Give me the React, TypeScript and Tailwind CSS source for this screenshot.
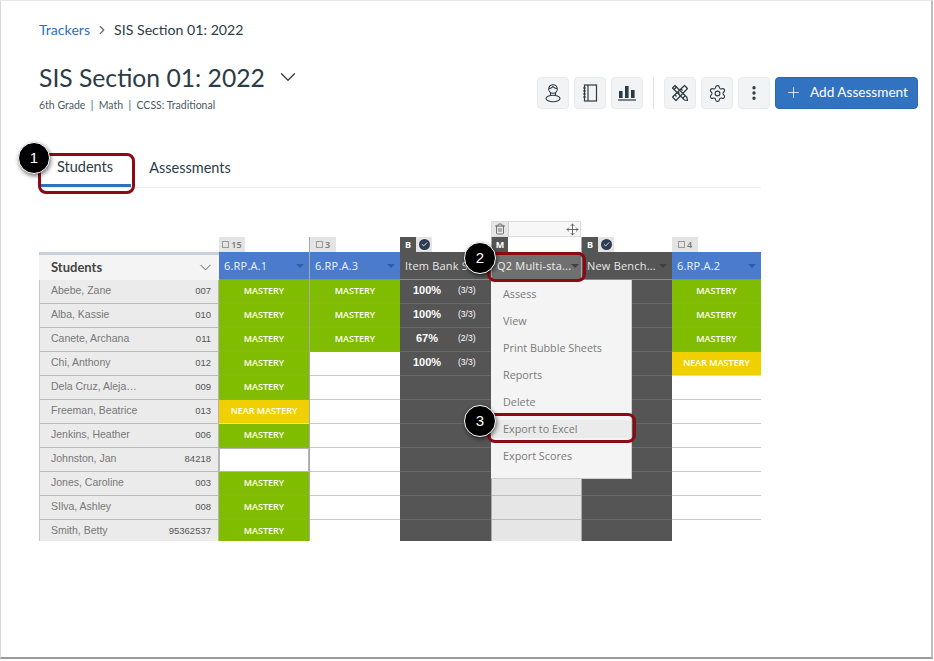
import React from "react";
import { ChevronDown, ChevronRight, Plus, Settings, EllipsisVertical, Trash2, Move, Check } from "lucide-react";

const students: [string, string][] = [
  ["Abebe, Zane", "007"],
  ["Alba, Kassie", "010"],
  ["Canete, Archana", "011"],
  ["Chi, Anthony", "012"],
  ["Dela Cruz, Aleja…", "009"],
  ["Freeman, Beatrice", "013"],
  ["Jenkins, Heather", "006"],
  ["Johnston, Jan", "84218"],
  ["Jones, Caroline", "003"],
  ["SIlva, Ashley", "008"],
  ["Smith, Betty", "95362537"],
];

const M = "MASTERY";
const N = "NEAR MASTERY";
const col1 = [M, M, M, M, M, N, M, "W", M, M, M];
const col2 = [M, M, M, "", "", "", "", "", "", "", ""];
const col6 = [M, M, M, N, "", "", "", "", "", "", ""];
const scores: [string, string][] = [
  ["100%", "(3/3)"],
  ["100%", "(3/3)"],
  ["67%", "(2/3)"],
  ["100%", "(3/3)"],
];
const indices = [0, 1, 2, 3, 4, 5, 6, 7, 8, 9, 10];

function Caret({ color }: { color: string }) {
  return (
    <svg width="8" height="4" viewBox="0 0 8 4" className="shrink-0">
      <path d="M0 0h8L4 4z" fill={color} />
    </svg>
  );
}

function Callout({ n, className }: { n: number; className: string }) {
  return (
    <div
      className={`absolute w-[32px] h-[32px] rounded-full bg-black border border-white text-white flex items-center justify-center text-[15px] shadow-[1px_2px_4px_rgba(0,0,0,0.55)] font-['Liberation_Sans',sans-serif] ${className}`}
    >
      {n}
    </div>
  );
}

function IconBtn({ children }: { children: React.ReactNode }) {
  return (
    <button className="shrink-0 w-[32px] h-[32px] rounded-[4px] bg-[#f2f3f4] border border-[#e8eaec] flex items-center justify-center text-[#2d3b45]">
      {children}
    </button>
  );
}

function MasteryCell({ v }: { v: string }) {
  if (v === M)
    return <div className="h-[24px] bg-[#80bc00] border-b border-[#8aa860] text-white flex items-center justify-center text-[9px] font-semibold pb-px">MASTERY</div>;
  if (v === N)
    return <div className="h-[24px] bg-[#f0d000] border-b border-[#ddd] text-white flex items-center justify-center text-[9px] font-semibold pb-px">NEAR MASTERY</div>;
  if (v === "W") return <div className="h-[24px] bg-white border border-[#b5b5b5]" />;
  return <div className="h-[24px] bg-white border-b border-[#c8c8c8]" />;
}

function Head({ label, dark, active }: { label: string; dark?: boolean; active?: boolean }) {
  return (
    <div
      className={`h-[28px] flex items-center justify-between pl-[5px] pr-[5px] text-[11px] border-b border-[#8d8d8d] ${
        active ? "bg-[#707070] text-[#efefef] pl-[4px]" : dark ? "bg-[#555555] text-[#e6e6e6]" : "bg-[#4a7bcd] text-[#eef3fb]"
      }`}
    >
      <span className="whitespace-nowrap tracking-[0.2px] pt-px">{label}</span>
      <Caret color={dark || active ? "#3f3f3f" : "#2f5da8"} />
    </div>
  );
}

function CountTag({ n }: { n: string }) {
  return (
    <div className="h-[15px] w-[26px] bg-[#e4e4e4] flex items-center justify-center gap-[2px] text-[9px] text-[#777] font-semibold">
      <span className="w-[7px] h-[7px] border border-[#999] inline-block" />
      {n}
    </div>
  );
}

function TypeTag({ letter, checked }: { letter: string; checked?: boolean }) {
  return (
    <div className="h-[15px] flex">
      <div className="w-[16px] bg-[#555] text-white text-[9px] font-bold flex items-center justify-center">{letter}</div>
      {checked && (
        <div className="w-[16px] bg-[#e4e4e4] flex items-center justify-center">
          <span className="w-[11px] h-[11px] rounded-full bg-[#2d3b55] flex items-center justify-center">
            <Check size={7} color="white" strokeWidth={3} />
          </span>
        </div>
      )}
    </div>
  );
}

function TagSlot({ children }: { children?: React.ReactNode }) {
  return <div className="h-[15px] flex">{children}</div>;
}

export default function App() {
  return (
    <div className="relative w-[934px] h-[661px] bg-white overflow-hidden font-['Lato',sans-serif]">
      <div className="w-[933px] h-[659px] border-l border-l-[#d9d9d9] border-t border-t-[#e8e8e8] border-r-2 border-r-[#bdbdbd] border-b-2 border-b-[#9a9a9a]">
        <div className="pl-[38px] pt-[20px]">
          <nav className="h-[18px] flex items-center text-[14.15px] text-[#2d3b45]">
            <span className="text-[#2d72bd]">Trackers</span>
            <ChevronRight size={14} className="mx-[5px] text-[#5b6b76]" />
            <span>SIS Section 01: 2022</span>
          </nav>

          <div className="flex pr-[12px] mt-[18px] h-[64px]">
            <div className="w-[498px] shrink-0">
              <div className="flex items-center h-[42px]">
                <h1 className="text-[24.7px] leading-[32px] text-[#2d3b45]">SIS Section 01: 2022</h1>
                <ChevronDown size={26} strokeWidth={1.15} className="ml-[10px] -mt-[3px] text-[#2d3b45]" />
              </div>
              <p className="text-[10.5px] leading-[14px] -mt-[1px] text-[#4a5862]">6th Grade&nbsp; |&nbsp; Math&nbsp; |&nbsp; CCSS: Traditional</p>
            </div>
            <div className="flex items-start pt-[20px] gap-[5px]">
              <IconBtn>
                <svg width="18" height="20" viewBox="0 0 18 20" fill="none" stroke="currentColor" strokeWidth="1.1">
                  <circle cx="9" cy="6" r="4.3" />
                  <path d="M5 5.5c2 0 3-.6 4-2 1 1.4 2.2 2 4 2" />
                  <path d="M6.5 10v2M11.5 10v2" />
                  <ellipse cx="9" cy="15.5" rx="7" ry="3.3" />
                </svg>
              </IconBtn>
              <IconBtn>
                <svg width="16" height="18" viewBox="0 0 16 18" fill="none" stroke="currentColor" strokeWidth="1.2">
                  <rect x="2.5" y="1" width="12" height="16" />
                  <path d="M6 1v16" />
                  <path d="M1 4h3M1 7h3M1 10h3M1 13h3" />
                </svg>
              </IconBtn>
              <IconBtn>
                <svg width="18" height="16" viewBox="0 0 18 16" fill="currentColor">
                  <rect x="1" y="6" width="3.6" height="7" />
                  <rect x="7" y="1" width="3.6" height="12" />
                  <rect x="13" y="5" width="3.6" height="8" />
                  <rect x="0" y="14.4" width="18" height="1.2" />
                </svg>
              </IconBtn>
              <div className="w-px h-[32px] bg-[#dfe2e4] mx-[5px]" />
              <IconBtn>
                <svg width="18" height="18" viewBox="0 0 18 18" fill="none" stroke="currentColor" strokeWidth="1.2" strokeLinejoin="round">
                  <path d="M1.5 4 4 1.5 16 13.5 16.5 16.5 13.5 16z" />
                  <path d="M3 5.5 5.5 3M12 14 14 12" />
                  <path d="M13.5 1.5 16.5 4.5 5 16.5 1.5 13z" />
                  <path d="M4 11l1.5 1.5M7 8l1.5 1.5M10 5l1.5 1.5" />
                </svg>
              </IconBtn>
              <IconBtn>
                <Settings size={19} strokeWidth={1.4} />
              </IconBtn>
              <IconBtn>
                <EllipsisVertical size={18} strokeWidth={2.5} />
              </IconBtn>
              <button className="shrink-0 w-[143px] h-[32px] rounded-[4px] bg-[#3273c1] border border-[#2b66ae] text-white text-[13.6px] flex items-center justify-center gap-[8px] pb-px">
                <Plus size={17} strokeWidth={1.1} />
                Add Assessment
              </button>
            </div>
          </div>
        </div>

        <div className="ml-[38px] mt-[25px] w-[722px] h-[42px] flex border-b border-[#eceeef] text-[14.5px] text-[#2d3b45]">
          <div className="w-[92px] h-[41px] flex items-center justify-center border-b-[3px] border-[#2d72bd] pt-[3px]">Students</div>
          <div className="ml-[13px] w-[92px] h-[41px] flex items-center justify-center pt-[2px]">Assessments</div>
        </div>

        <div className="ml-[38px] mt-[49px] w-[722px] flex h-[304px] overflow-hidden font-['Open_Sans',sans-serif]">
          <div className="w-[180px] shrink-0 font-['Liberation_Sans',sans-serif]">
            <div className="h-[15px]" />
            <div className="h-[28px] bg-[#f4f4f4] border-t-[3px] border-[#c9d0d8] flex items-center justify-between pl-[12px] pr-[4px] font-['Lato',sans-serif] text-[13px] font-bold text-[#444]">
              Students
              <ChevronDown size={19} strokeWidth={1} className="text-[#333]" />
            </div>
            {students.map(([name, id]) => (
              <div key={id} className="h-[24px] bg-[#ebebeb] border-b border-[#bbbbbb] border-l border-l-[#c8c8c8] border-r border-r-[#b5b5b5] flex items-center justify-between pl-[11px] pr-[7px] pb-[1px] text-[10.5px] text-[#777]">
                <span>{name}</span>
                <span className="text-[9.5px] text-[#555]">{id}</span>
              </div>
            ))}
          </div>

          <div className="w-[91px] shrink-0 border-r border-[#a9a9a9]">
            <TagSlot><CountTag n="15" /></TagSlot>
            <Head label="6.RP.A.1" />
            {col1.map((v, i) => <MasteryCell key={i} v={v} />)}
          </div>
          <div className="w-[90px] shrink-0">
            <TagSlot><CountTag n="3" /></TagSlot>
            <Head label="6.RP.A.3" />
            {col2.map((v, i) => <MasteryCell key={i} v={v} />)}
          </div>
          <div className="w-[91px] shrink-0">
            <TagSlot><TypeTag letter="B" checked /></TagSlot>
            <Head label="Item Bank S..." dark />
            {indices.map((i) => (
              <div key={i} className="h-[24px] bg-[#555555] border-b border-[#696969] flex items-center text-white pb-[2px] font-['Liberation_Sans',sans-serif]">
                {scores[i] && (
                  <>
                    <span className="w-[58px] text-center font-bold text-[11px] pr-[4px]">{scores[i][0]}</span>
                    <span className="text-[8.5px]">{scores[i][1]}</span>
                  </>
                )}
              </div>
            ))}
          </div>
          <div className="w-[90px] shrink-0 border-l border-[#a9a9a9]">
            <TagSlot><TypeTag letter="M" /></TagSlot>
            <Head label="Q2 Multi-sta..." active />
            {indices.map((i) => (
              <div key={i} className="h-[24px] bg-[#e6e6e6] border-b border-[#bdbdbd]" />
            ))}
          </div>
          <div className="w-[91px] shrink-0 border-l border-[#a9a9a9]">
            <TagSlot><TypeTag letter="B" checked /></TagSlot>
            <Head label="New Bench..." dark />
            {indices.map((i) => (
              <div key={i} className="h-[24px] bg-[#555555] border-b border-[#696969]" />
            ))}
          </div>
          <div className="w-[89px] shrink-0">
            <TagSlot><CountTag n="4" /></TagSlot>
            <Head label="6.RP.A.2" />
            {col6.map((v, i) => <MasteryCell key={i} v={v} />)}
          </div>
        </div>
      </div>

      {/* tool strip above the selected column */}
      <div className="absolute left-[491px] top-[221px] w-[90px] h-[16px] bg-[#ededed] border border-[#dcdcdc] flex items-center justify-between">
        <div className="w-[17px] h-full bg-[#e6e6e6] flex items-center justify-center border-r border-[#d0d0d0]">
          <Trash2 size={12} strokeWidth={1.6} className="text-[#555]" />
        </div>
        <div className="flex-1 h-full bg-[#f7f7f7] flex items-center justify-end pr-[1px]">
          <Move size={13} strokeWidth={1.6} className="text-[#555]" />
        </div>
      </div>

      {/* dropdown menu */}
      <div className="absolute left-[491px] top-[280px] w-[141px] h-[199px] bg-[#f4f4f4] border-r border-b border-[#cfcfcf] font-['Open_Sans',sans-serif] text-[10.8px] text-[#7a7a7a] pt-[5px] flex flex-col gap-[9px]">
        {["Assess", "View", "Print Bubble Sheets", "Reports", "Delete", "Export to Excel", "Export Scores"].map((t) => (
          <div key={t} className={`h-[18px] leading-[18px] whitespace-nowrap pl-[12px] ${t === "Export to Excel" ? "bg-[#ebebeb]" : ""}`}>{t}</div>
        ))}
      </div>

      {/* highlight outlines */}
      <div className="absolute left-[38px] top-[153px] w-[97px] h-[41px] rounded-[8px] border-[3px] border-[#8c0a13]" />
      <div className="absolute left-[487px] top-[252px] w-[99px] h-[30px] rounded-[8px] border-[3px] border-[#8c0a13]" />
      <div className="absolute left-[487px] top-[413px] w-[149px] h-[30px] rounded-[8px] border-[3px] border-[#8c0a13]" />

      <Callout n={1} className="left-[18px] top-[142px]" />
      <Callout n={2} className="left-[464px] top-[242px]" />
      <Callout n={3} className="left-[464px] top-[405px]" />
    </div>
  );
}
